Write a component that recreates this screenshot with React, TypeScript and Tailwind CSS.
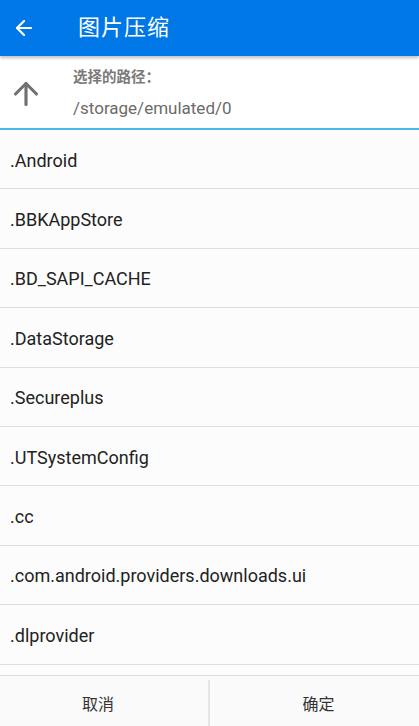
import { ArrowLeft, ArrowUp } from 'lucide-react'

const FOLDERS = [
  '.Android',
  '.BBKAppStore',
  '.BD_SAPI_CACHE',
  '.DataStorage',
  '.Secureplus',
  '.UTSystemConfig',
  '.cc',
  '.com.android.providers.downloads.ui',
  '.dlprovider',
]

export default function App() {
  return (
    <div className="w-[419px] h-[726px] flex flex-col bg-[#fcfcfc] overflow-hidden" style={{ fontFamily: 'Roboto, "Noto Sans CJK SC", sans-serif' }}>
      {/* 顶栏 */}
      <div className="h-[56px] flex-shrink-0 bg-[#0077e6] flex items-center relative z-10 shadow-[0_2px_3px_rgba(0,0,0,0.25)]">
        <ArrowLeft size={24} strokeWidth={2.2} className="text-white ml-[12px]" />
        <h1 className="ml-[42px] text-white text-[22px] leading-none tracking-[1px]">图片压缩</h1>
      </div>

      {/* 当前路径 */}
      <div className="h-[74px] flex-shrink-0 flex items-center bg-white border-b-2 border-[#4ab6e8]">
        <div className="w-[73px] flex-shrink-0 pl-[8px] pt-[4px]">
          <ArrowUp size={36} strokeWidth={2.1} className="text-[#707070]" />
        </div>
        <div className="flex flex-col pt-[4px]">
          <span className="text-[14.5px] font-bold text-[#7a7a7a] leading-none">选择的路径：</span>
          <span className="mt-[15px] text-[17px] text-[#6b6b6b] leading-none">/storage/emulated/0</span>
        </div>
      </div>

      {/* 目录列表 */}
      <div className="flex-1 overflow-hidden">
        {FOLDERS.map(f => (
          <div key={f} className="h-[59.4px] flex items-center px-[10px] pt-[2px] border-b border-[#dedede] text-[18px] text-[#222]">
            {f}
          </div>
        ))}
      </div>

      {/* 底部按钮 */}
      <div className="h-[51px] flex-shrink-0 flex border-t border-[#dedede] bg-[#fafafa]">
        <button className="w-[208px] h-full pt-[7px] pr-[12px] text-[16px] text-[#333]">取消</button>
        <div className="w-[2px] mt-[4px] bg-[#e4e4e4]" />
        <button className="flex-1 h-full pt-[7px] pl-[8px] text-[16px] text-[#333]">确定</button>
      </div>
    </div>
  )
}
